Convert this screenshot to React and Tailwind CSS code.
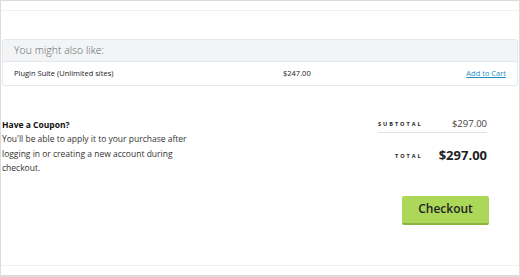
export default function App() {
  return (
    <div
      className="w-[520px] h-[277px] bg-white border border-[#dcdcdc] border-b-2 flex flex-col overflow-hidden text-[#333]"
      style={{ fontFamily: '"Open Sans", "Liberation Sans", sans-serif' }}
    >
      <div className="h-[10px] border-b border-[#f0f0f0] shrink-0" />

      {/* You might also like */}
      <div className="mt-[28px] mx-px rounded-[3px] border border-[#e6e9ec] shrink-0">
        <div className="h-[22px] bg-[#f2f4f6] px-[11px] flex items-center border-b border-[#e6e9ec]">
          <span className="text-[10.5px] font-light text-[#666] leading-none">You might also like:</span>
        </div>
        <div className="h-[23px] px-[11px] flex items-center text-[7.5px] text-[#222]">
          <span className="w-[269px]">Plugin Suite (Unlimited sites)</span>
          <span className="flex-1">$247.00</span>
          <a href="#" className="text-[#1e8cbe] underline">Add to Cart</a>
        </div>
      </div>

      {/* coupon + totals */}
      <div className="flex mt-[32px] pl-px">
        <div className="w-[200px]">
          <p className="text-[8.5px] font-bold text-[#111] leading-[14px]">Have a Coupon?</p>
          <p className="text-[8.5px] text-[#333] leading-[14.5px]">
            You'll be able to apply it to your purchase after logging in or creating a new account during checkout.
          </p>
        </div>
        <div className="ml-auto mr-[32px] w-[109px] flex flex-col">
          <div className="flex items-center justify-between h-[15px] border-b border-[#dde3e8] pb-[2px]">
            <span className="text-[5.5px] font-bold tracking-[2px] text-[#222]">SUBTOTAL</span>
            <span className="text-[9.5px] text-[#444]">$297.00</span>
          </div>
          <div className="flex items-center justify-end h-[24px] mt-[11px]">
            <span className="text-[5.5px] font-bold tracking-[2px] text-[#222] mr-[16px]">TOTAL</span>
            <span className="text-[13px] font-bold text-[#222]">$297.00</span>
          </div>
        </div>
      </div>

      <div className="flex justify-end mr-[30px] mt-[20px]">
        <button className="w-[87px] h-[29px] bg-[#acd85a] border-b-2 border-[#8ab544] rounded-[2px] text-[12px] font-semibold text-[#222]">
          Checkout
        </button>
      </div>

      <div className="mt-auto mb-[9px] border-b border-[#f0f0f0]" />
    </div>
  )
}
